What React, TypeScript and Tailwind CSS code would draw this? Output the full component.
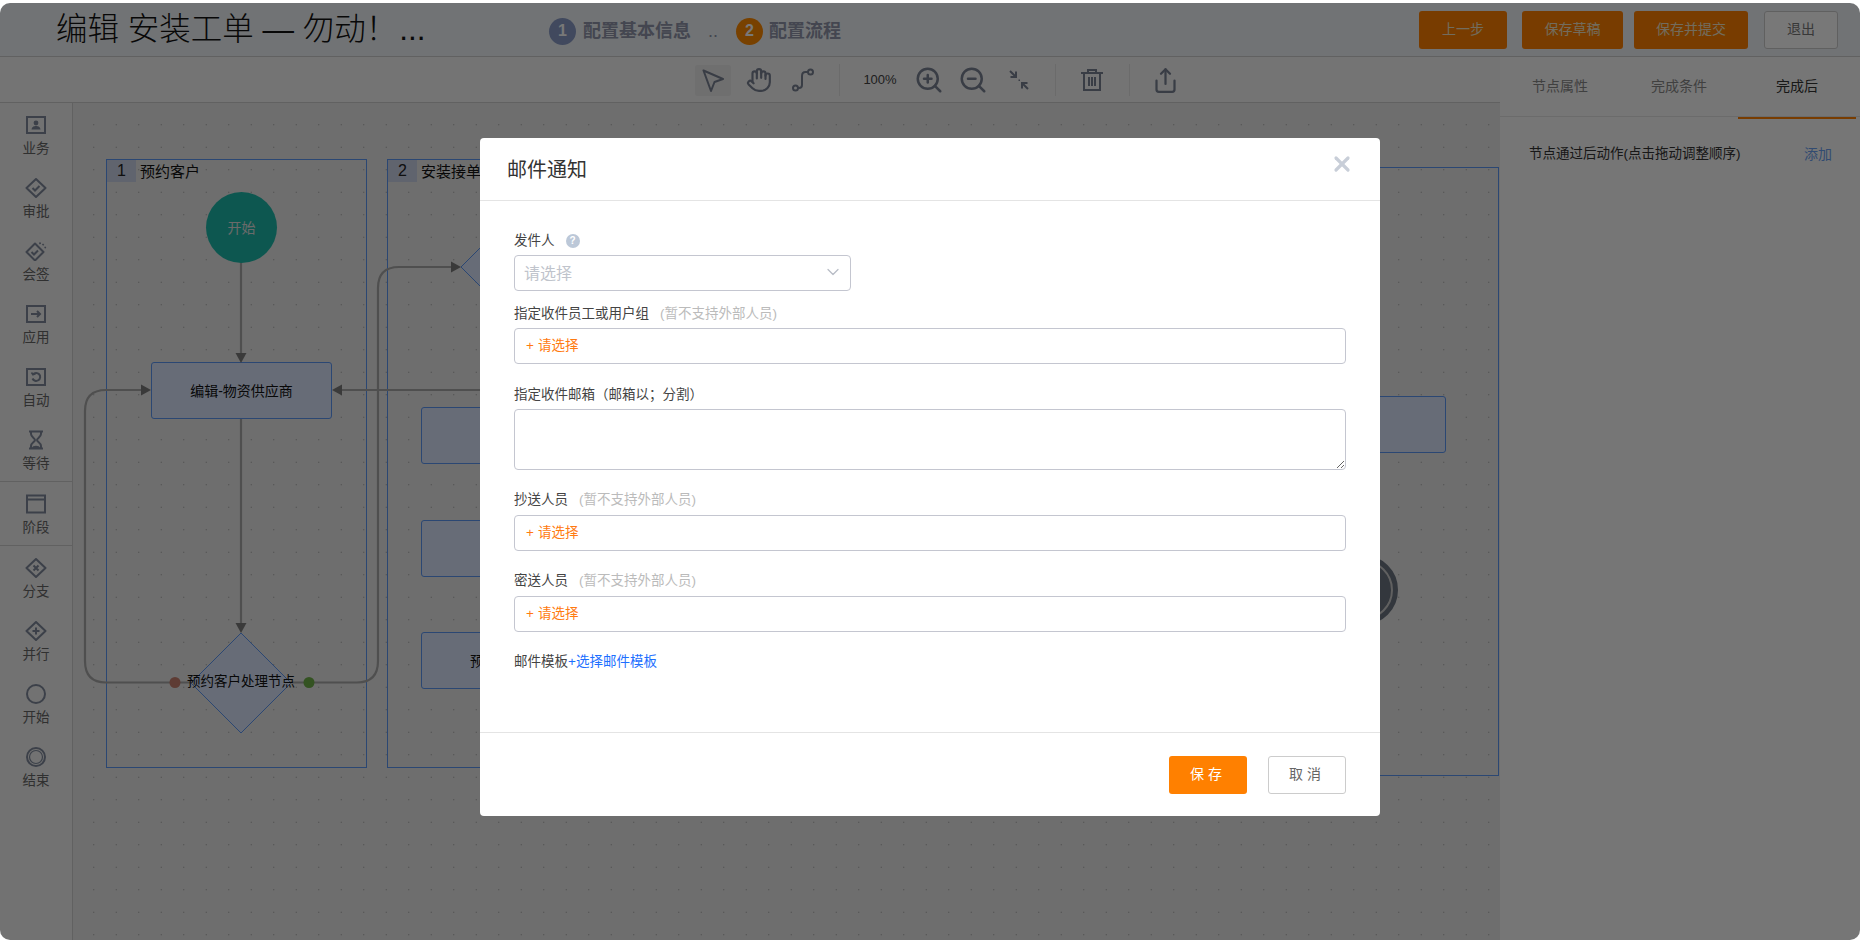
import { ChevronDown, Hand, Share, X, ZoomIn, ZoomOut } from "lucide-react"
import type { ReactNode } from "react"

const Box = ({ children }: { children: ReactNode }) => (
  <svg width="22" height="20" viewBox="0 0 22 20" fill="none" stroke="#7f899b" strokeWidth="2">
    {children}
  </svg>
)

const sideIcons: Record<string, ReactNode> = {
  business: (
    <Box>
      <rect x="2" y="2" width="18" height="16" />
      <circle cx="11" cy="8" r="2.4" fill="#7f899b" stroke="none" />
      <path d="M6.500 14.500c.5-3 2.500-3.500 4.500-3.500s4 .5 4.500 3.500z" fill="#7f899b" stroke="none" />
    </Box>
  ),
  approve: (
    <Box>
      <path d="M11 1 20.500 10 11 19 1.500 10z" strokeLinejoin="round" />
      <path d="m7.500 10 2.500 2.500 4.500-4.500" />
    </Box>
  ),
  sign: (
    <Box>
      <path d="M10 2.500 18.500 11 10 19.500 1.500 11z" strokeLinejoin="round" />
      <path d="m6.500 11 2.500 2.500 4-4" />
      <path d="M14.500 1.500l1 1.500M17.500 3l1.200 1.200M19.500 6.200l1.500.6" strokeWidth="1.600" />
    </Box>
  ),
  app: (
    <Box>
      <rect x="2" y="2" width="18" height="16" />
      <path d="M6 10h9M12 7l3 3-3 3" />
    </Box>
  ),
  auto: (
    <Box>
      <rect x="2" y="2" width="18" height="16" />
      <path d="M8 7.500a4 4 0 1 1-.5 4" />
      <path d="M6.500 5.500 8 7.800 10.500 6.800" strokeWidth="1.600" />
    </Box>
  ),
  wait: (
    <Box>
      <path d="M4 1.500h14M4 18.500h14M6 1.500v2.500c0 3 4 4 4 6s-4 3-4 6v2.500M16 1.500v2.500c0 3-4 4-4 6s4 3 4 6v2.500" />
      <path d="M7 18c0-3 8-3 8 0z" fill="#7f899b" stroke="none" />
    </Box>
  ),
  stage: (
    <Box>
      <rect x="2" y="1.500" width="18" height="17" />
      <path d="M2 5.500h18" />
    </Box>
  ),
  branch: (
    <Box>
      <path d="M11 1 20.500 10 11 19 1.500 10z" strokeLinejoin="round" />
      <path d="m8.500 7.500 5 5M13.500 7.500l-5 5" />
    </Box>
  ),
  parallel: (
    <Box>
      <path d="M11 1 20.500 10 11 19 1.500 10z" strokeLinejoin="round" />
      <path d="M11 6.500v7M7.500 10h7" />
    </Box>
  ),
  start: (
    <Box>
      <circle cx="11" cy="10" r="9" />
    </Box>
  ),
  end: (
    <Box>
      <circle cx="11" cy="10" r="9" />
      <circle cx="11" cy="10" r="6.500" strokeWidth="1.200" />
    </Box>
  ),
}

const SideItem = ({ icon, label }: { icon: string; label: string }) => (
  <div className="flex h-[63px] flex-col items-center pt-[12px]">
    <div className="flex h-[20px] items-center">{sideIcons[icon]}</div>
    <span className="mt-[6px] text-[13.500px] leading-[16px] text-[#666]">{label}</span>
  </div>
)

const Sidebar = () => (
  <div className="w-[73px] shrink-0 border-r border-[#cfcfcf] bg-[#f2f2f2]">
    <SideItem icon="business" label="业务" />
    <SideItem icon="approve" label="审批" />
    <SideItem icon="sign" label="会签" />
    <SideItem icon="app" label="应用" />
    <SideItem icon="auto" label="自动" />
    <SideItem icon="wait" label="等待" />
    <div className="border-y border-[#cfcfcf]">
      <SideItem icon="stage" label="阶段" />
    </div>
    <SideItem icon="branch" label="分支" />
    <SideItem icon="parallel" label="并行" />
    <SideItem icon="start" label="开始" />
    <SideItem icon="end" label="结束" />
  </div>
)

const Header = () => (
  <div className="flex h-[54px] items-center border-b border-[#cfcfcf] bg-[#f1f5f8]">
    <div className="w-[549px] shrink-0 pl-[56px] text-[31.500px] font-light text-[#111]">
      编辑 安装工单 — 勿动！<span className="ml-[2px]">...</span>
    </div>
    <div className="mt-[3px] flex h-[27px] w-[27px] items-center justify-center rounded-full bg-[#8a9cc8] text-[16px] font-bold text-white">1</div>
    <span className="ml-[7px] mt-[3px] text-[18px] font-bold text-[#9096ab]">配置基本信息</span>
    <span className="ml-[17px] mt-[3px] w-[28px] text-[18px] text-[#9096ab]">..</span>
    <div className="mt-[3px] flex h-[27px] w-[27px] items-center justify-center rounded-full bg-[#ff8a00] text-[16px] font-bold text-white">2</div>
    <span className="ml-[6px] mt-[3px] text-[18px] font-bold text-[#9096ab]">配置流程</span>
    <div className="ml-auto flex items-center pr-[22px] text-[14px]">
      <button className="h-[38px] w-[88px] rounded-[3px] bg-[#ff8000] text-[#f2e6c8]">上一步</button>
      <button className="ml-[15px] h-[38px] w-[101px] rounded-[3px] bg-[#ff8000] text-[#f2e6c8]">保存草稿</button>
      <button className="ml-[11px] h-[38px] w-[114px] rounded-[3px] bg-[#ff8000] text-[#f2e6c8]">保存并提交</button>
      <button className="ml-[16px] h-[38px] w-[74px] rounded-[3px] border border-[#ccc] bg-white text-[#777]">退出</button>
    </div>
  </div>
)

const Sep = () => <div className="h-[32px] w-px bg-[#e4e4e4]" />

const Toolbar = () => (
  <div className="flex h-[46px] items-center border-b border-[#cfcfcf] bg-[#f6f6f6] pl-[695px] pt-[1px] text-[#7a8294]">
    <div className="flex h-[31px] w-[36px] items-center justify-center rounded-[3px] bg-[#ebebeb]">
      <svg width="24" height="24" viewBox="0 0 24 24" fill="none" stroke="currentColor" strokeWidth="2" strokeLinejoin="round">
        <path d="M2.500 2.500 22 11l-8.500 3L10 23z" />
      </svg>
    </div>
    <div className="flex w-[56px] justify-center">
      <Hand size={26} strokeWidth={2} />
    </div>
    <div className="flex w-[31px] justify-center">
      <svg width="24" height="26" viewBox="0 0 24 26" fill="none" stroke="currentColor" strokeWidth="2">
        <circle cx="4.500" cy="21" r="2.500" />
        <circle cx="19.500" cy="5" r="2.500" />
        <path d="M7 21h1c2 0 3-1 3-3V9c0-2 1-4 3.500-4H17" />
      </svg>
    </div>
    <div className="w-[21px]" />
    <Sep />
    <div className="w-[80px] text-center text-[13px] text-[#444]">100%</div>
    <div className="flex w-[18px] justify-center">
      <div className="shrink-0">
        <ZoomIn size={30} strokeWidth={2} />
      </div>
    </div>
    <div className="flex w-[70px] justify-center">
      <ZoomOut size={30} strokeWidth={2} />
    </div>
    <div className="flex w-[22px] justify-center">
      <div className="shrink-0">
        <svg width="24" height="24" viewBox="0 0 24 24" fill="none" stroke="currentColor" strokeWidth="2">
          <path d="M3 3l6 6M9 3.500V9H3.500" />
          <path d="M21 21l-6-6M15 20.500V15h5.500" />
          <path d="M11.500 11.500h1.500v1.500h-1.500z" fill="currentColor" stroke="none" />
        </svg>
      </div>
    </div>
    <div className="w-[25px]" />
    <Sep />
    <div className="flex w-[71px] justify-center">
      <svg width="24" height="26" viewBox="0 0 24 26" fill="none" stroke="currentColor" strokeWidth="2">
        <path d="M1 6h22M8 6V3h8v3M4 6v17h16V6" />
        <path d="M9 10v9M12 10v9M15 10v9" />
      </svg>
    </div>
    <div className="w-[2px]" />
    <Sep />
    <div className="flex w-[70px] justify-center">
      <Share size={27} strokeWidth={2} />
    </div>
  </div>
)

const FlowNode = ({ className, children }: { className: string; children?: ReactNode }) => (
  <div className={`absolute flex items-center justify-center rounded-[3px] border-[1.500px] border-[#5c97f5] bg-[#dbe6fd] pt-[2px] text-[14px] text-[#111] ${className}`}>
    {children}
  </div>
)

const Lane = ({ className, num, title }: { className: string; num: string; title: string }) => (
  <div className={`absolute border-[1.500px] border-[#5c97f5] ${className}`}>
    <div className="flex h-[22px] items-center">
      <div className="flex h-[22px] w-[29px] items-center justify-center bg-[#cdd5ea] text-[16px] text-[#222]">{num}</div>
      <span className="ml-[4px] pt-[2px] text-[15px] text-[#111]">{title}</span>
    </div>
  </div>
)

const Canvas = () => (
  <div className="relative flex-1 overflow-hidden bg-[#e9e9e9] bg-[radial-gradient(#9a9a9a_0.6px,transparent_0.8px)] bg-[length:22.500px_22.500px] bg-[position:9.500px_10.500px]">
    <Lane className="left-[33px] top-[56px] h-[609px] w-[261px]" num="1" title="预约客户" />
    <Lane className="left-[314px] top-[56px] h-[609px] w-[261px]" num="2" title="安装接单" />
    <Lane className="left-[595px] top-[64px] h-[609px] w-[831px]" num="3" title="" />

    <FlowNode className="left-[78px] top-[259px] h-[57px] w-[181px]">编辑-物资供应商</FlowNode>
    <FlowNode className="left-[348px] top-[304px] h-[57px] w-[181px]" />
    <FlowNode className="left-[348px] top-[417px] h-[57px] w-[181px]" />
    <FlowNode className="left-[348px] top-[529px] h-[57px] w-[181px] !justify-start pl-[48px]">预</FlowNode>
    <FlowNode className="left-[1192px] top-[293px] h-[57px] w-[181px]" />

    <svg className="absolute inset-0" width="1427" height="836" viewBox="73 104 1427 836" fill="none">
      <g stroke="#5c97f5" strokeLinejoin="round" fill="#dbe6fd">
        <polygon points="241,634 291,684 241,734 191,684" />
        <polygon points="461,268 511,218 561,268 511,318" />
      </g>
      <g stroke="#a8a8a8" strokeWidth="2.200">
        <path d="M241 263V354" />
        <path d="M241 420V625" />
        <path d="M175 683.500H106Q85 683.500 85 662V412Q85 391 106 391H142" />
        <path d="M309 683.500H357Q378 683.500 378 662V289Q378 268 399 268H452" />
        <path d="M1000 391H342" />
        <path d="M192 683.500H175M290 683.500H309" />
      </g>
      <g fill="#7c7c7c">
        <polygon points="235.500,354 246.500,354 241,364" />
        <polygon points="235.500,624 246.500,624 241,634" />
        <polygon points="141,385.500 141,396.500 151,391" />
        <polygon points="451,262.500 451,273.500 461,268" />
        <polygon points="342,385.500 342,396.500 332,391" />
      </g>
      <circle cx="175" cy="683.500" r="5.500" fill="#c8806f" />
      <circle cx="309" cy="683.500" r="5.500" fill="#6fb04a" />
      <circle cx="1363" cy="591" r="32" fill="#6c7582" stroke="#6c7582" strokeWidth="6" />
      <circle cx="1363" cy="591" r="29" stroke="#ccc" strokeWidth="2" />
    </svg>

    <div className="absolute left-[133px] top-[89px] flex h-[71px] w-[71px] items-center justify-center rounded-full bg-[#1cb9aa] pt-[2px] text-[14px] text-[#e2e2e2]">开始</div>
    <div className="absolute left-[98px] top-[569px] w-[140px] text-center text-[13.500px] leading-[20px] text-[#111]">预约客户处理节点</div>
  </div>
)

const RightPanel = () => (
  <div className="w-[360px] shrink-0 bg-[#fbfbfb]">
    <div className="flex h-[60px] border-b border-[#e4e4e4] text-[14px]">
      <div className="flex h-[59px] w-[120px] items-center justify-center text-[#888]">节点属性</div>
      <div className="flex h-[59px] w-[118px] items-center justify-center text-[#888]">完成条件</div>
      <div className="relative flex h-[59px] w-[118px] items-center justify-center text-[#333]">
        完成后
        <div className="absolute bottom-[-3px] left-0 h-[2px] w-full bg-[#ff8000]" />
      </div>
    </div>
    <div className="flex items-center justify-between pl-[29px] pr-[28px] pt-[27px]">
      <span className="text-[13.500px] leading-[20px] text-[#333]">节点通过后动作(点击拖动调整顺序)</span>
      <span className="text-[14px] leading-[20px] text-[#6a9ff0]">添加</span>
    </div>
  </div>
)

const Picker = () => (
  <div className="flex h-[36px] items-center rounded-[4px] border border-[#c4c6d0] px-[11px] text-[13.500px] text-[#ff7a10]">
    <span className="mr-[4px]">+</span>
    请选择
  </div>
)

const FieldLabel = ({ text, hint, className }: { text: string; hint?: string; className: string }) => (
  <div className={`text-[13.500px] leading-[22px] text-[#444] ${className}`}>
    {text}
    {hint && <span className="ml-[11px] text-[#bbb]">{hint}</span>}
  </div>
)

const MailModal = () => (
  <div className="mx-auto mt-[135px] w-[900px] rounded-[4px] bg-white">
    <div className="flex h-[63px] items-center justify-between border-b border-[#e4e4e4] pl-[27px] pr-[26px]">
      <span className="pt-[2px] text-[20px] text-[#333]">邮件通知</span>
      <X size={24} strokeWidth={3.200} className="mb-[11px] text-[#c8ced8]" />
    </div>
    <div className="h-[531px] px-[34px] pt-[29px]">
      <div className="flex items-center text-[13.500px] leading-[22px] text-[#444]">
        发件人
        <span className="ml-[11px] flex h-[14px] w-[14px] items-center justify-center rounded-full bg-[#bcc8d8] text-[10px] font-bold text-white">?</span>
      </div>
      <div className="mt-[3px] flex h-[36px] w-[337px] items-center justify-between rounded-[4px] border border-[#c4c6d0] pl-[9px] pr-[7px] text-[16px] text-[#c0c4cc]">
        <span className="pt-[1px]">请选择</span>
        <ChevronDown size={20} strokeWidth={1.500} className="mb-[2px] text-[#b8bcc6]" />
      </div>
      <FieldLabel className="mt-[12px]" text="指定收件员工或用户组" hint="(暂不支持外部人员)" />
      <div className="mt-[3px]">
        <Picker />
      </div>
      <FieldLabel className="mt-[20px]" text="指定收件邮箱（邮箱以；分割）" />
      <textarea className="mt-[3px] block h-[61px] w-full rounded-[4px] border border-[#c4c6d0] bg-white" />
      <FieldLabel className="mt-[19px]" text="抄送人员" hint="(暂不支持外部人员)" />
      <div className="mt-[4px]">
        <Picker />
      </div>
      <FieldLabel className="mt-[19px]" text="密送人员" hint="(暂不支持外部人员)" />
      <div className="mt-[4px]">
        <Picker />
      </div>
      <div className="mt-[19px] text-[13.500px] leading-[22px] text-[#444]">
        邮件模板<span className="text-[#1d6fff]">+选择邮件模板</span>
      </div>
    </div>
    <div className="flex h-[84px] justify-end gap-[21px] border-t border-[#e4e4e4] px-[34px] pt-[23px] text-[14px] tracking-[4px]">
      <button className="h-[38px] w-[78px] rounded-[3px] bg-[#ff8000] pb-[2px] text-white">保存</button>
      <button className="h-[38px] w-[78px] rounded-[3px] border border-[#ccc] bg-white pb-[2px] text-[#666]">取消</button>
    </div>
  </div>
)

export default function App() {
  return (
    <div className="h-[940px] w-[1860px] overflow-hidden bg-white pt-[3px] font-['Liberation_Sans','Noto_Sans_CJK_SC',sans-serif]">
      <div className="relative flex h-[937px] flex-col overflow-hidden rounded-[10px]">
        <Header />
        <div className="flex min-h-0 flex-1">
          <div className="flex min-w-0 flex-1 flex-col">
            <Toolbar />
            <div className="flex min-h-0 flex-1">
              <Sidebar />
              <Canvas />
            </div>
          </div>
          <RightPanel />
        </div>
        <div className="absolute inset-0 bg-black/[0.53]">
          <MailModal />
        </div>
      </div>
    </div>
  )
}
